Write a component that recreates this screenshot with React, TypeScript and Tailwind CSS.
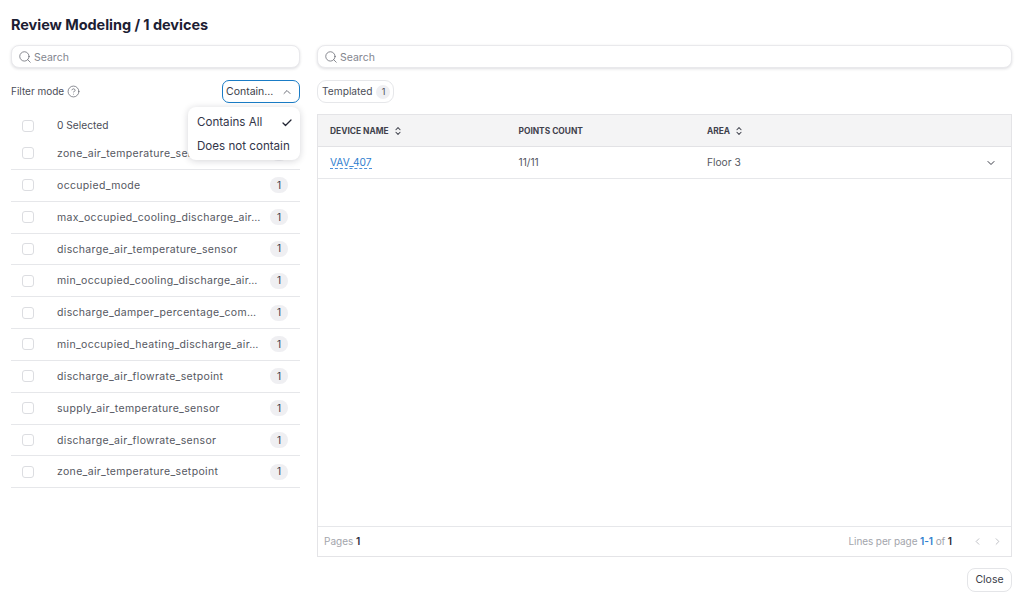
import { Search, CircleHelp, ChevronUp, ChevronDown, ChevronLeft, ChevronRight, ChevronsUpDown, Check } from "lucide-react";

const rows = [
  "zone_air_temperature_sensor",
  "occupied_mode",
  "max_occupied_cooling_discharge_air…",
  "discharge_air_temperature_sensor",
  "min_occupied_cooling_discharge_air…",
  "discharge_damper_percentage_com…",
  "min_occupied_heating_discharge_air…",
  "discharge_air_flowrate_setpoint",
  "supply_air_temperature_sensor",
  "discharge_air_flowrate_sensor",
  "zone_air_temperature_setpoint",
];

function SearchBox() {
  return (
    <div className="flex h-[23px] items-center gap-[2px] rounded-[8px] border border-[#e9e9ec] bg-white pl-[6px] shadow-[0_1px_3px_rgba(20,20,40,0.14)]">
      <Search size={14} strokeWidth={1.25} className="text-[#5c5f69]" />
      <span className="pt-[2px] text-[10.5px] text-[#83868f]">Search</span>
    </div>
  );
}

function Box() {
  return <span className="ml-[11px] h-[12px] w-[12px] shrink-0 rounded-[3px] border border-[#dcdde1] bg-white" />;
}

export default function App() {
  return (
    <div className="flex h-[606px] w-[1024px] flex-col overflow-hidden bg-white pl-[11px] pr-[12px] pt-[15px] text-[#3a3c47] [font-family:Inter,'Liberation_Sans',sans-serif]">
      <h1 className="h-[19px] text-[14.5px] font-bold leading-[19px] tracking-[-0.05px] text-[#1c2033]">Review Modeling / 1 devices</h1>
      <div className="mt-[11px] flex flex-1 gap-[17px]">
        <div className="relative w-[289px] shrink-0">
          <SearchBox />
          <div className="mt-[12px] flex h-[23px] items-center justify-between">
            <div className="flex items-center gap-[3px] text-[10px] text-[#4b4d57]">
              Filter mode
              <CircleHelp size={13} strokeWidth={1.25} className="text-[#555862]" />
            </div>
            <div className="flex h-[23px] w-[78px] items-center justify-between rounded-[7px] border-[1.5px] border-[#1a7cc6] bg-white pl-[3px] pr-[6px] text-[10.5px] text-[#3a3c47]">
              Contain...
              <ChevronUp size={12} strokeWidth={2} className="text-[#6f717a]" />
            </div>
          </div>
          <div className="absolute left-[177px] top-[62px] z-10 flex h-[53px] w-[112px] flex-col justify-center rounded-[8px] bg-white pl-[9px] pr-[7px] pt-[2px] text-[11.6px] text-[#33364a] shadow-[0_1px_7px_rgba(20,20,40,0.18)]">
            <div className="flex h-[24px] items-center justify-between">
              Contains All
              <Check size={12} strokeWidth={2.5} className="text-[#222533]" />
            </div>
            <div className="flex h-[24px] items-center whitespace-nowrap">Does not contain</div>
          </div>
          <div className="mt-[10px] flex h-[25px] items-center text-[10.2px] text-[#4b4d57]">
            <Box />
            <span className="ml-[23px]">0 Selected</span>
          </div>
          {rows.map((r) => (
            <div key={r} className="flex h-[31.85px] items-center border-b border-[#e6e7ea] pr-[12px] text-[10.5px] tracking-[0.33px] text-[#55575f]">
              <Box />
              <span className="ml-[23px] whitespace-nowrap pt-[1px]">{r}</span>
              <span className="ml-auto flex h-[16px] w-[18px] shrink-0 items-center justify-center rounded-full bg-[#efeff2] text-[10px] tracking-normal text-[#3a3c47]">1</span>
            </div>
          ))}
        </div>
        <div className="flex min-w-0 flex-1 flex-col">
          <SearchBox />
          <div className="mt-[12px] flex h-[23px] w-[77px] items-center gap-[4px] rounded-[9px] border border-[#e6e7ea] pl-[4px] text-[10.2px] text-[#4b4d57]">
            Templated
            <span className="flex h-[14px] w-[14px] items-center justify-center rounded-full bg-[#efeff2] text-[9px]">1</span>
          </div>
          <div className="mt-[11px] flex h-[443px] flex-col border border-[#e4e4e7]">
            <div className="flex h-[32px] items-center border-b border-[#e2e2e5] bg-[#f4f4f5] pl-[12px] pt-[1px] text-[8.4px] font-bold text-[#3f414c]">
              <div className="flex w-[188.5px] items-center gap-[4px]">DEVICE NAME <ChevronsUpDown size={10} strokeWidth={2.5} /></div>
              <div className="w-[188.5px]">POINTS COUNT</div>
              <div className="flex items-center gap-[4px]">AREA <ChevronsUpDown size={10} strokeWidth={2.5} /></div>
            </div>
            <div className="flex h-[32px] items-center border-b border-[#e6e7ea] pl-[12px] pr-[14px] text-[10.2px] text-[#55575f]">
              <div className="w-[188.5px]">
                <span className="border-b border-dashed border-[#4a90d9] leading-[12px] text-[#2f80cf]">VAV_407</span>
              </div>
              <div className="w-[188.5px]">11/11</div>
              <div className="flex-1">Floor 3</div>
              <ChevronDown size={12} strokeWidth={2} className="text-[#3a3c47]" />
            </div>
            <div className="flex-1" />
            <div className="flex h-[30px] items-center justify-between border-t border-[#e6e7ea] pl-[6px] pr-[8px] text-[10px] text-[#a3a5ac]">
              <div>Pages <b className="font-semibold text-[#2a2c38]">1</b></div>
              <div className="flex items-center">
                <span className="tracking-[-0.1px]">Lines per page <b className="font-semibold text-[#2f80cf]">1-1</b> of <b className="font-semibold text-[#2a2c38]">1</b></span>
                <ChevronLeft size={11} strokeWidth={1.5} className="ml-[20px]" />
                <ChevronRight size={11} strokeWidth={1.5} className="ml-[9px]" />
              </div>
            </div>
          </div>
          <div className="mt-[11px] flex justify-end">
            <div className="flex h-[24px] w-[45px] items-center justify-center rounded-[8px] border border-[#e4e5e8] text-[10.5px] text-[#3a3c47]">Close</div>
          </div>
        </div>
      </div>
    </div>
  );
}
